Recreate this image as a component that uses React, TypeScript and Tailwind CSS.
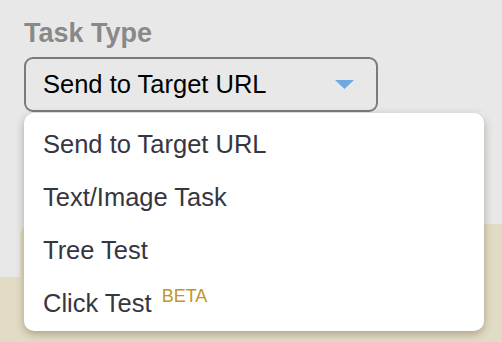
import React from "react";

const items = ["Send to Target URL", "Text/Image Task", "Tree Test"];

export default function App() {
  return (
    <div
      className="relative flex h-[342px] w-[502px] flex-col overflow-hidden bg-[#e8e8e8]"
      style={{ fontFamily: '"Liberation Sans", Arial, sans-serif' }}
    >
      {/* top: field label + select */}
      <div className="px-6 pt-[16px]">
        <label className="block text-[27px] font-bold leading-[34px] text-[#898989]">
          Task Type
        </label>
        <div className="relative mt-[7px] w-[354px]">
          <div className="flex h-[55px] items-center justify-between rounded-[9px] border-2 border-[#7b7b7b] pl-[17px] pr-[22px]">
            <span className="text-[25.5px] leading-none text-black">Send to Target URL</span>
            <svg width="19" height="9" viewBox="0 0 19 9">
              <path d="M0 0 H19 L9.5 9 Z" fill="#6ca9dd" />
            </svg>
          </div>

          {/* open dropdown menu */}
          <div className="absolute left-0 top-[56px] z-10 w-[460px] rounded-[10px] bg-white pb-[1px] pt-[5px] shadow-[0_3px_8px_rgba(60,50,20,0.35)]">
            {items.map((label) => (
              <div
                key={label}
                className="h-[53px] pl-[19px] text-[25.5px] leading-[53px] text-[#363641]"
              >
                {label}
              </div>
            ))}
            <div className="h-[53px] pl-[19px] text-[25.5px] leading-[53px] text-[#363641]">
              Click Test
              <span className="ml-[10px] align-[10px] text-[18px] leading-none text-[#c4952a]">
                BETA
              </span>
            </div>
          </div>
        </div>
      </div>

      {/* faint panel to the right of the select */}
      <div className="absolute left-[399px] top-[112px] h-[46px] w-[86px] bg-[#ececec]" />

      {/* beige area under the menu */}
      <div className="mt-auto flex flex-col">
        <div className="pl-5">
          <div className="h-[53px] rounded-tl-[12px] bg-[#e3dcc5]" />
        </div>
        <div className="h-[65px] bg-[#e3dcc5]" />
      </div>
    </div>
  );
}
